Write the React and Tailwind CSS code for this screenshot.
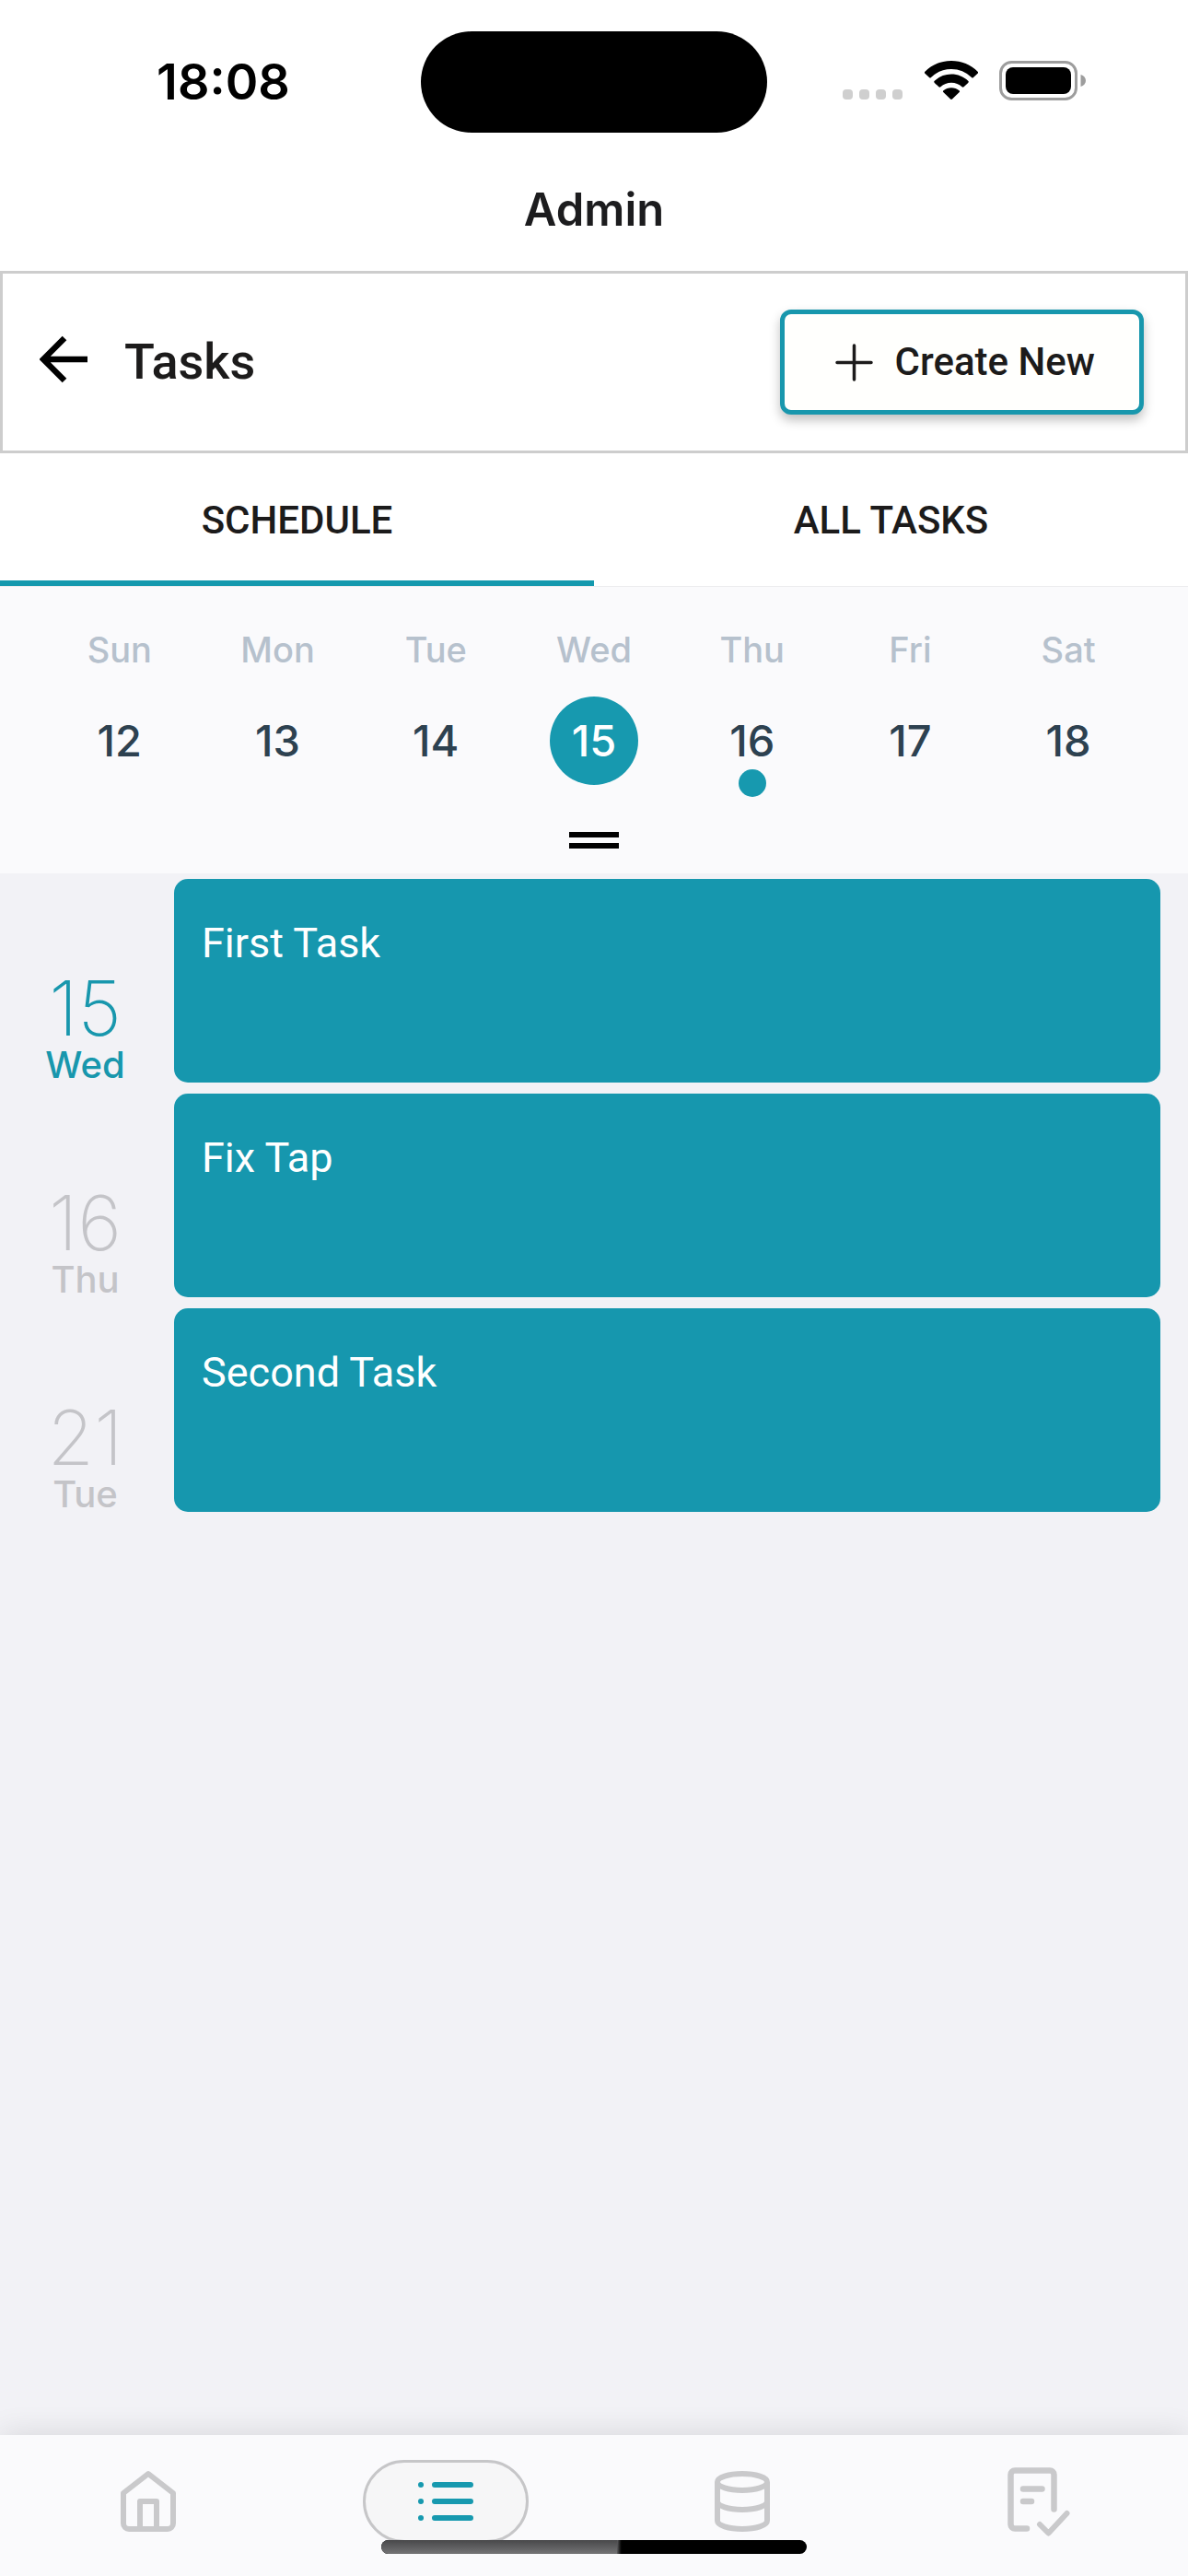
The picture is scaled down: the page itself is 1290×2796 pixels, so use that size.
import React from "react";

const week = [
  { day: "Sun", date: 12 },
  { day: "Mon", date: 13 },
  { day: "Tue", date: 14 },
  { day: "Wed", date: 15, selected: true },
  { day: "Thu", date: 16, marked: true },
  { day: "Fri", date: 17 },
  { day: "Sat", date: 18 },
];

const tasks = [
  { date: 15, day: "Wed", title: "First Task", today: true },
  { date: 16, day: "Thu", title: "Fix Tap" },
  { date: 21, day: "Tue", title: "Second Task" },
];

function WifiIcon() {
  return (
    <svg width="58" height="42" viewBox="0 0 58 42" aria-hidden="true">
      <path d="M29 0C40 0 50.400 4.300 57.600 11.700a1.400 1.400 0 0 1 0 2L53 18.100a1.400 1.400 0 0 1-2 0A31.600 31.600 0 0 0 29 9 31.600 31.600 0 0 0 7 18.100a1.400 1.400 0 0 1-2 0L.4 13.700a1.400 1.400 0 0 1 0-2C7.600 4.300 18 0 29 0Z" />
      <path d="M29 14.600c7 0 13.400 2.700 18.200 7.200a1.400 1.400 0 0 1 0 2.100l-4.600 4.400a1.500 1.500 0 0 1-2 0A17 17 0 0 0 29 23.700a17 17 0 0 0-11.600 4.600 1.500 1.500 0 0 1-2 0l-4.600-4.400a1.400 1.400 0 0 1 0-2.100A26.500 26.500 0 0 1 29 14.600Z" />
      <path d="M29 29.200c3.200 0 6.200 1.200 8.500 3.100a1.300 1.300 0 0 1 0 2l-7.500 7.200a1.400 1.400 0 0 1-2 0l-7.500-7.200a1.300 1.300 0 0 1 0-2c2.300-1.900 5.300-3.100 8.500-3.100Z" />
    </svg>
  );
}

function BatteryIcon() {
  return (
    <svg width="95" height="43" viewBox="0 0 95 43" aria-hidden="true">
      <rect x="1.500" y="1.500" width="82" height="40" rx="12" fill="none" stroke="#9d9d9d" strokeWidth="3" />
      <rect x="7" y="7" width="71" height="29" rx="8" />
      <path d="M88.500 15c3.500 1.200 5.500 3.600 5.500 6.500s-2 5.300-5.500 6.500Z" fill="#9d9d9d" />
    </svg>
  );
}

function SignalDots() {
  return (
    <svg width="66" height="42" viewBox="0 0 66 42" fill="#cfcfcf" aria-hidden="true">
      {[0, 18, 36, 54].map((x) => (
        <rect key={x} x={x} y="31" width="11" height="11" rx="4" />
      ))}
    </svg>
  );
}

function HomeIcon() {
  return (
    <svg width="72" height="72" viewBox="0 0 24 24" fill="none" stroke="currentColor" strokeWidth="2" strokeLinejoin="round" aria-hidden="true">
      <path d="M3 9 12 2l9 7v11a2 2 0 0 1-2 2H5a2 2 0 0 1-2-2Z" />
      <path d="M9 22V12h6v10" />
    </svg>
  );
}

function ListIcon() {
  return (
    <svg width="72" height="72" viewBox="0 0 24 24" fill="none" stroke="currentColor" strokeWidth="2" strokeLinecap="round" aria-hidden="true">
      <path d="M8 6h13M8 12h13M8 18h13M3 6h.01M3 12h.01M3 18h.01" />
    </svg>
  );
}

function DatabaseIcon() {
  return (
    <svg width="72" height="72" viewBox="0 0 24 24" fill="none" stroke="currentColor" strokeWidth="2" aria-hidden="true">
      <ellipse cx="12" cy="5" rx="9" ry="3" />
      <path d="M21 12c0 1.660-4 3-9 3s-9-1.340-9-3" />
      <path d="M3 5v14c0 1.660 4 3 9 3s9-1.340 9-3V5" />
    </svg>
  );
}

function ReportIcon() {
  return (
    <svg width="72" height="76" viewBox="2 2 72 76" fill="none" stroke="currentColor" strokeWidth="6.500" strokeLinecap="round" strokeLinejoin="round" aria-hidden="true">
      <path d="M24 69.500H11A4.500 4.500 0 0 1 6.500 65V11A4.500 4.500 0 0 1 11 6.500h38A4.500 4.500 0 0 1 53.500 11v37.500" />
      <path d="M20 26.500h20.500M20 40h9" />
      <path d="m38 65 9.500 9.500L67.500 53" strokeWidth="6" />
    </svg>
  );
}

const navItems = [
  { label: "Home", Icon: HomeIcon },
  { label: "Tasks", Icon: ListIcon, active: true },
  { label: "Data", Icon: DatabaseIcon },
  { label: "Reports", Icon: ReportIcon },
];

export default function App() {
  return (
    <div className="flex min-h-screen flex-col bg-[#f2f2f6] font-['Inter',sans-serif]">
      <header className="bg-white">
        <div className="grid grid-cols-[1fr_376px_1fr] items-center pt-[34px]">
          <div className="pl-7 text-center text-[54px] leading-[60px] font-semibold text-black">18:08</div>
          <div className="h-[110px] rounded-full bg-black" />
          <div className="flex items-center justify-center gap-[23px] pr-7 pb-1">
            <SignalDots />
            <WifiIcon />
            <BatteryIcon />
          </div>
        </div>
        <h1 className="pt-[54px] pb-9 text-center text-[49px] leading-[60px] font-semibold text-[#1c1c1e]">Admin</h1>
      </header>

      <div className="flex items-center justify-between border-3 border-[#cdcdcd] bg-white py-[39px] pr-[45px] pl-10 font-['Roboto',sans-serif] font-medium text-[#1c1b1b]">
        <div className="flex items-center gap-[38px]">
          <button type="button" aria-label="Back" className="text-black">
            <svg width="54" height="58" viewBox="1 0 54 58" fill="none" stroke="currentColor" strokeWidth="6.500" aria-hidden="true">
              <path d="M53 26H5M28 3 5 26l23 23" />
            </svg>
          </button>
          <h2 className="text-[54px] leading-[60px]">Tasks</h2>
        </div>
        <button
          type="button"
          className="flex items-center gap-6 rounded-xl border-5 border-[#1897ad] bg-[#fffffd] py-[25px] pr-12 pl-[55px] text-[42px] leading-[54px] shadow-[0_6px_12px_rgba(0,0,0,0.25)]"
        >
          <svg width="41" height="41" viewBox="0 0 41 41" fill="none" stroke="currentColor" strokeWidth="3.500" strokeLinecap="round" aria-hidden="true">
            <path d="M20.500 2v37M2 20.500h37" />
          </svg>
          Create New
        </button>
      </div>

      <div role="tablist" className="grid grid-cols-2 bg-white font-['Roboto',sans-serif] text-[42px] leading-[54px] font-medium text-[#1c1b1b]">
        <button type="button" role="tab" aria-selected="true" className="border-b-6 border-[#1499ae] pt-[46px] pb-[38px]">
          SCHEDULE
        </button>
        <button type="button" role="tab" aria-selected="false" className="border-b-6 border-transparent pt-[46px] pb-[38px]">
          ALL TASKS
        </button>
      </div>

      <section aria-label="Week" className="border-t border-[#ececee] bg-[#fafafc] pt-11 pb-[27px]">
        <div className="grid grid-cols-7 px-11">
          {week.map(({ day, date, selected, marked }) => (
            <div key={day} className="flex flex-col items-center gap-[27px]">
              <span className="text-[38px] leading-[48px] font-medium text-[#b6c1cd]">{day}</span>
              <button
                type="button"
                className={
                  selected
                    ? "relative size-24 rounded-full bg-[#1799af] text-[47px] font-medium text-white"
                    : "relative size-24 rounded-full text-[47px] font-medium text-[#2d4150]"
                }
              >
                {date}
                {marked && <span className="absolute top-[79px] left-[33px] size-[30px] rounded-full bg-[#1799af]" />}
              </button>
            </div>
          ))}
        </div>
        <div className="mx-auto mt-[51px] flex w-[54px] flex-col gap-1.5">
          <span className="h-1.5 bg-black" />
          <span className="h-1.5 bg-black" />
        </div>
      </section>

      <main className="flex-1 pt-1.5 pr-[30px]">
        <ul>
          {tasks.map(({ date, day, title, today }) => (
            <li key={title} className="flex">
              <div
                className={
                  today
                    ? "w-[189px] shrink-0 pt-[103px] pr-1 text-center text-[#1897ad]"
                    : "w-[189px] shrink-0 pt-[103px] pr-1 text-center text-[#c4c4c8]"
                }
              >
                <div className="text-[82px] leading-[76px] font-extralight">{date}</div>
                <div className="text-[40px] leading-[46px] font-medium">{day}</div>
              </div>
              <article className="mb-3 min-h-[221px] flex-1 rounded-[15px] bg-[#1697ae] px-[30px] pt-[43px]">
                <h3 className="font-['Roboto',sans-serif] text-[45px] leading-[54px] text-white">{title}</h3>
              </article>
            </li>
          ))}
        </ul>
      </main>

      <nav className="sticky bottom-0 bg-[#fafafc] pt-[27px] pb-9 shadow-[0_0_32px_rgba(0,0,0,0.12)]">
        <div className="grid grid-cols-4">
          {navItems.map(({ label, Icon, active }) => (
            <button
              key={label}
              type="button"
              aria-label={label}
              className={
                active
                  ? "mx-auto flex h-[90px] w-[180px] items-center justify-center rounded-full border-3 border-[#c6c6c8] bg-[#f6f6f7] text-[#1799af]"
                  : "mx-auto flex h-[90px] w-[180px] items-center justify-center text-[#c9c9cb]"
              }
            >
              <Icon />
            </button>
          ))}
        </div>
        <div className="absolute inset-x-0 bottom-6 mx-auto flex h-[15px] w-[462px] overflow-hidden rounded-full bg-black">
          <span className="w-[256px] bg-linear-to-b from-[#48484a] to-[#747476]" />
          <span className="w-1.5 bg-linear-to-r from-[#5e5e60] to-black" />
        </div>
      </nav>
    </div>
  );
}
